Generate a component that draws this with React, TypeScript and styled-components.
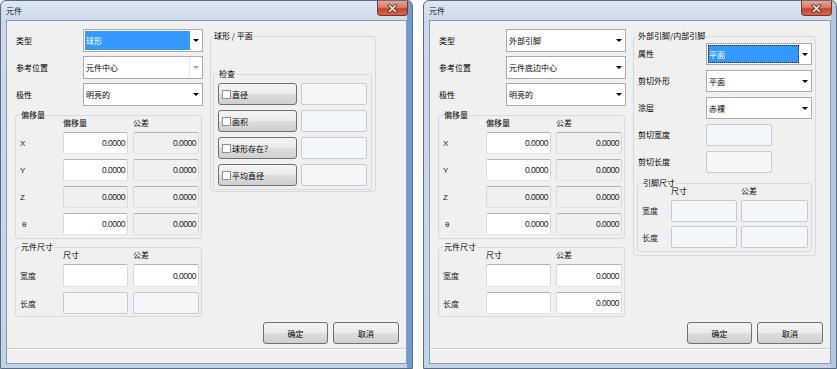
import React from 'react'
import styled, { createGlobalStyle } from 'styled-components'

type BoxKind = 'edit' | 'readonly' | 'disabled'

interface Cell {
  kind: BoxKind
  value?: string
}

interface GridRow {
  label: string
  cells: Cell[]
  indent?: boolean
}

const ZERO = '0.0000'

const GlobalStyle = createGlobalStyle`
  * { box-sizing: border-box; }
  html, body { margin: 0; padding: 0; background: #ffffff; }
  body {
    font-family: "Noto Sans CJK SC", "Liberation Sans", sans-serif;
    font-size: 8px;
    color: #000;
  }
`

const Desktop = styled.div`
  display: flex;
  gap: 10px;
  width: 837px;
  height: 369px;
  overflow: hidden;
  background: #ffffff;
`

const Window = styled.div<{ $width: number; $edge: string }>`
  flex: none;
  width: ${p => p.$width}px;
  height: 369px;
  display: flex;
  flex-direction: column;
  padding: 0 5px 4px;
  border: 1px solid #5b6d82;
  border-radius: 6px 6px 0 0;
  background:
    linear-gradient(90deg, rgba(0, 0, 0, 0) calc(100% - 5px), ${p => p.$edge} calc(100% - 5px)),
    linear-gradient(180deg, #dde7f3 0, #ccdaeb 20px, #c2d4e8 100%);
`

const TitleBar = styled.div`
  flex: none;
  height: 19px;
  display: flex;
  align-items: center;
  justify-content: space-between;
`

const Title = styled.span`
  font-size: 8px;
  color: #111;
`

const CloseButton = styled.div`
  align-self: flex-start;
  width: 31px;
  height: 15px;
  margin-right: -1px;
  display: flex;
  align-items: center;
  justify-content: center;
  border: 1px solid #7a3224;
  border-top: none;
  border-radius: 0 0 4px 4px;
  background: linear-gradient(180deg, #e9a594 0%, #da7a63 45%, #c6452d 55%, #d4684b 100%);
`

const Client = styled.div`
  flex: 1;
  min-height: 0;
  display: flex;
  flex-direction: column;
  background: #f0f0f0;
  border: 1px solid #8a9cb2;
`

const Body = styled.div`
  flex: 1;
  display: flex;
  flex-direction: column;
  padding: 8px 7px 4px 8px;
`

const StatusBar = styled.div`
  flex: none;
  height: 15px;
  background: #f1efef;
  border-top: 1px solid #cdcdcd;
  box-shadow: inset 0 1px #ffffff;
`

const Panes = styled.div`
  display: flex;
  align-items: flex-start;
  gap: 7px;
`

const LeftPane = styled.div`
  flex: none;
  width: 188px;
  display: flex;
  flex-direction: column;
`

const RightPane = styled.div`
  margin-top: 3px;
`

const FieldGrid = styled.div<{ $cols: string; $rowH: number; $gap: number; $pl: number; $colGap?: number }>`
  display: grid;
  grid-template-columns: ${p => p.$cols};
  grid-auto-rows: ${p => p.$rowH}px;
  row-gap: ${p => p.$gap}px;
  column-gap: ${p => p.$colGap ?? 0}px;
  padding-left: ${p => p.$pl}px;
  align-items: stretch;
`

const FieldLabel = styled.div`
  display: flex;
  align-items: center;
  line-height: 1;
`

const Group = styled.fieldset<{ $w?: number; $pad: string; $mt?: number; $mr?: number }>`
  margin: ${p => p.$mt ?? 0}px ${p => p.$mr ?? 0}px 0 0;
  min-width: 0;
  width: ${p => (p.$w ? `${p.$w}px` : 'auto')};
  padding: ${p => p.$pad};
  border: 1px solid #d4dae0;
  border-radius: 3px;
`

const Legend = styled.legend`
  padding: 0 1px;
  line-height: 8px;
  font-size: 8px;
`

const ValueGrid = styled.div<{ $cols: string; $rows: string; $rowGap: number; $colGap: number }>`
  display: grid;
  grid-template-columns: ${p => p.$cols};
  grid-template-rows: ${p => p.$rows};
  row-gap: ${p => p.$rowGap}px;
  column-gap: ${p => p.$colGap}px;
`

const ColHeader = styled.div`
  line-height: 8px;
  align-self: end;
`

const RowLabel = styled.div<{ $indent?: boolean }>`
  display: flex;
  align-items: center;
  padding-left: ${p => (p.$indent ? 2 : 0)}px;
  font-family: "Liberation Sans", "Noto Sans CJK SC", sans-serif;
  font-size: 8px;
  color: #222;
`

const CjkRowLabel = styled(RowLabel)`
  font-family: "Noto Sans CJK SC", sans-serif;
`

const boxBg: Record<BoxKind, string> = {
  edit: '#ffffff',
  readonly: '#f0f0f0',
  disabled: '#f3f6fa',
}

const ValueBox = styled.div<{ $kind: BoxKind; $w?: number }>`
  height: 100%;
  width: ${p => (p.$w ? `${p.$w}px` : 'auto')};
  display: flex;
  align-items: center;
  justify-content: flex-end;
  padding-right: 2px;
  border: 1px solid;
  border-color: ${p => (p.$kind === 'disabled' ? '#c6cad0' : '#b3b3b3 #d8d8d8 #e2e2e2 #d8d8d8')};
  border-radius: 2px;
  background: ${p => boxBg[p.$kind]};
  font-family: "Liberation Sans", sans-serif;
  font-size: 8.5px;
  letter-spacing: -0.5px;
  color: #1c1c1c;
`

const ComboFrame = styled.div`
  height: 100%;
  display: flex;
  align-items: stretch;
  padding: 1px 0 1px 1px;
  background: #ffffff;
  border: 1px solid #acacac;
`

const ComboValue = styled.div<{ $selected?: boolean; $focused?: boolean; $disabled?: boolean }>`
  flex: 1;
  display: flex;
  align-items: center;
  padding-left: 1px;
  background: ${p => (p.$selected ? '#3399ff' : 'transparent')};
  color: ${p => (p.$selected ? '#ffffff' : '#000000')};
  outline: ${p => (p.$focused ? '1px dotted #222' : 'none')};
  outline-offset: -1px;
  border-right: ${p => (p.$disabled ? '1px solid #e4e4e4' : 'none')};
`

const ComboArrow = styled.div<{ $disabled?: boolean }>`
  flex: none;
  width: 12px;
  display: flex;
  align-items: center;
  justify-content: center;

  &::after {
    content: '';
    border-left: 3px solid transparent;
    border-right: 3px solid transparent;
    border-top: 3px solid ${p => (p.$disabled ? '#a6a6a6' : '#000')};
  }
`

const winButton = `
  border: 1px solid #707070;
  border-radius: 3px;
  background: linear-gradient(180deg, #f4f4f4 0%, #ebebeb 48%, #dddddd 52%, #cfcfcf 100%);
  font-family: "Noto Sans CJK SC", sans-serif;
  font-size: 8px;
  color: #000;
  cursor: default;
`

const CheckButton = styled.button`
  ${winButton}
  height: 22px;
  display: flex;
  align-items: center;
  gap: 1px;
  padding: 0 0 0 3px;
`

const CheckBox = styled.span`
  width: 9px;
  height: 9px;
  background: #ffffff;
  border: 1px solid #8e8f8f;
`

const ButtonRow = styled.div`
  margin-top: auto;
  display: flex;
  justify-content: flex-end;
  gap: 5px;
`

const PushButton = styled.button<{ $w: number }>`
  ${winButton}
  width: ${p => p.$w}px;
  height: 22px;
  padding: 0;
`

function Combo({ value, selected, focused, disabled }: { value: string; selected?: boolean; focused?: boolean; disabled?: boolean }) {
  return (
    <ComboFrame>
      <ComboValue $selected={selected} $focused={focused} $disabled={disabled}>{value}</ComboValue>
      <ComboArrow $disabled={disabled} />
    </ComboFrame>
  )
}

function ValueTable({ rows, headers, cols, rowsTpl, rowGap, colGap }: {
  rows: GridRow[]
  headers: string[]
  cols: string
  rowsTpl: string
  rowGap: number
  colGap: number
}) {
  return (
    <ValueGrid $cols={cols} $rows={rowsTpl} $rowGap={rowGap} $colGap={colGap}>
      <div />
      {headers.map(h => <ColHeader key={h}>{h}</ColHeader>)}
      {rows.map(row => (
        <React.Fragment key={row.label}>
          {/^[A-Zθ]$/.test(row.label)
            ? <RowLabel $indent={row.indent}>{row.label}</RowLabel>
            : <CjkRowLabel>{row.label}</CjkRowLabel>}
          {row.cells.map((c, i) => (
            <ValueBox key={i} $kind={c.kind}>{c.value}</ValueBox>
          ))}
        </React.Fragment>
      ))}
    </ValueGrid>
  )
}

const offsetRows: GridRow[] = [
  { label: 'X', cells: [{ kind: 'edit', value: ZERO }, { kind: 'readonly', value: ZERO }] },
  { label: 'Y', cells: [{ kind: 'edit', value: ZERO }, { kind: 'readonly', value: ZERO }] },
  { label: 'Z', cells: [{ kind: 'readonly', value: ZERO }, { kind: 'readonly', value: ZERO }] },
  { label: 'θ', indent: true, cells: [{ kind: 'edit', value: ZERO }, { kind: 'readonly', value: ZERO }] },
]

const leftSizeRows: GridRow[] = [
  { label: '宽度', cells: [{ kind: 'edit' }, { kind: 'edit', value: ZERO }] },
  { label: '长度', cells: [{ kind: 'disabled' }, { kind: 'disabled' }] },
]

const rightSizeRows: GridRow[] = [
  { label: '宽度', cells: [{ kind: 'edit' }, { kind: 'edit', value: ZERO }] },
  { label: '长度', cells: [{ kind: 'edit' }, { kind: 'edit', value: ZERO }] },
]

const pinSizeRows: GridRow[] = [
  { label: '宽度', cells: [{ kind: 'disabled' }, { kind: 'disabled' }] },
  { label: '长度', cells: [{ kind: 'disabled' }, { kind: 'disabled' }] },
]

const checks = ['直径', '面积', '球形存在？', '平均直径']

function CloseGlyph() {
  return (
    <svg width="11" height="9" viewBox="0 0 11 9">
      <path d="M2.5 1.5 L8.5 7.5 M8.5 1.5 L2.5 7.5" stroke="#5a2014" strokeWidth="3" strokeLinecap="square" />
      <path d="M2.5 1.5 L8.5 7.5 M8.5 1.5 L2.5 7.5" stroke="#ffffff" strokeWidth="1.5" strokeLinecap="square" />
    </svg>
  )
}

interface DialogProps {
  width: number
  edge: string
  typeValue: string
  typeSelected?: boolean
  refValue: string
  refDisabled?: boolean
  sizeRows: GridRow[]
  children: React.ReactNode
}

function Dialog({ width, edge, typeValue, typeSelected, refValue, refDisabled, sizeRows, children }: DialogProps) {
  return (
    <Window $width={width} $edge={edge}>
      <TitleBar>
        <Title>元件</Title>
        <CloseButton><CloseGlyph /></CloseButton>
      </TitleBar>
      <Client>
        <Body>
          <Panes>
            <LeftPane>
              <FieldGrid $cols="67px 120px" $rowH={23} $gap={4} $pl={1}>
                <FieldLabel>类型</FieldLabel>
                <Combo value={typeValue} selected={typeSelected} />
                <FieldLabel>参考位置</FieldLabel>
                <Combo value={refValue} disabled={refDisabled} />
                <FieldLabel>极性</FieldLabel>
                <Combo value="明亮的" />
              </FieldGrid>
              <Group $w={187} $pad="0 2px 3px 4px" $mt={5}>
                <Legend>偏移量</Legend>
                <ValueTable rows={offsetRows} headers={['偏移量', '公差']} cols="38px 65px 66px" rowsTpl="8px repeat(4, 22px)" rowGap={5} colGap={5} />
              </Group>
              <Group $w={187} $pad="0 2px 2px 4px" $mt={4}>
                <Legend>元件尺寸</Legend>
                <ValueTable rows={sizeRows} headers={['尺寸', '公差']} cols="38px 65px 66px" rowsTpl="8px 23px 22px" rowGap={5} colGap={5} />
              </Group>
            </LeftPane>
            <RightPane>{children}</RightPane>
          </Panes>
          <ButtonRow>
            <PushButton $w={65}>确定</PushButton>
            <PushButton $w={66}>取消</PushButton>
          </ButtonRow>
        </Body>
        <StatusBar />
      </Client>
    </Window>
  )
}

export default function App() {
  return (
    <>
      <GlobalStyle />
      <Desktop>
        <Dialog width={413} edge="#6e9bd3" typeValue="球形" typeSelected refValue="元件中心" refDisabled sizeRows={leftSizeRows}>
          <Group $w={166} $pad="0 3px 1px 2px">
            <Legend>球形 / 平面</Legend>
            <Group $pad="5px 4px 3px 4px" $mt={30}>
              <Legend>检查</Legend>
              <FieldGrid $cols="79px 66px" $rowH={22} $gap={5} $pl={0} $colGap={4}>
                {checks.map(c => (
                  <React.Fragment key={c}>
                    <CheckButton><CheckBox />{c}</CheckButton>
                    <ValueBox $kind="disabled" />
                  </React.Fragment>
                ))}
              </FieldGrid>
            </Group>
          </Group>
        </Dialog>
        <Dialog width={414} edge="#b4c6dc" typeValue="外部引脚" refValue="元件底边中心" sizeRows={rightSizeRows}>
          <Group $w={183} $pad="3px 2px 3px 3px">
            <Legend>外部引脚/内部引脚</Legend>
            <FieldGrid $cols="68px 106px" $rowH={22} $gap={5} $pl={1}>
              <FieldLabel>属性</FieldLabel>
              <Combo value="平面" selected focused />
              <FieldLabel>剪切外形</FieldLabel>
              <Combo value="平面" />
              <FieldLabel>涂层</FieldLabel>
              <Combo value="赤裸" />
              <FieldLabel>剪切宽度</FieldLabel>
              <ValueBox $kind="disabled" $w={66} />
              <FieldLabel>剪切长度</FieldLabel>
              <ValueBox $kind="disabled" $w={66} />
            </FieldGrid>
            <Group $pad="0 3px 3px 4px" $mt={6} $mr={1}>
              <Legend>引脚尺寸</Legend>
              <ValueTable rows={pinSizeRows} headers={['尺寸', '公差']} cols="25px 66px 67px" rowsTpl="8px 22px 22px" rowGap={4.5} colGap={4} />
            </Group>
          </Group>
        </Dialog>
      </Desktop>
    </>
  )
}
